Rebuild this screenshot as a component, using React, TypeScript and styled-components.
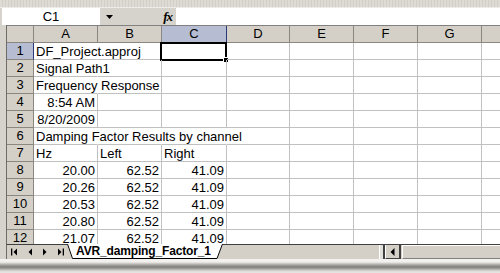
import styled, { createGlobalStyle } from 'styled-components'

const GlobalStyle = createGlobalStyle`
  html, body {
    margin: 0;
    padding: 0;
  }
  body {
    width: 500px;
    height: 273px;
    overflow: hidden;
    background: #d6d3cc;
    font-family: "Liberation Sans", Arial, sans-serif;
  }
`

const Window = styled.div`
  width: 500px;
  height: 273px;
  display: flex;
  flex-direction: column;
  overflow: hidden;
  background: #d6d3cc;
`

const TopStrip = styled.div`
  flex: none;
  height: 7px;
  border-bottom: 1px solid #ecebe7;
  background: repeating-linear-gradient(90deg, #dedbd5 0 2px, #d2cfc8 2px 3px);
`

const FormulaBar = styled.div`
  flex: none;
  height: 17px;
  display: flex;
  padding-left: 2px;
  font-size: 13px;
`

const NameBox = styled.div`
  width: 98px;
  background: #fff;
  text-align: center;
  line-height: 17px;
  color: #000;
`

const DropButton = styled.div`
  width: 18px;
  display: flex;
  align-items: center;
  justify-content: center;
  background: #d6d3cc;
`

const FxLabel = styled.div`
  width: 58px;
  display: flex;
  align-items: center;
  justify-content: flex-end;
  padding-right: 4px;
  box-sizing: border-box;
  font-family: "Liberation Serif", "Times New Roman", serif;
  font-style: italic;
  font-weight: bold;
  font-size: 13px;
  letter-spacing: -1px;
`

const FormulaInput = styled.div`
  flex: 1;
  background: #fff;
`

const SheetArea = styled.div`
  flex: none;
  height: 218px;
  margin-left: 6px;
  border-left: 1px solid #6f6c66;
  border-top: 1px solid #808080;
  overflow: hidden;
  background: #fff;
`

const Grid = styled.div`
  display: grid;
  grid-template-columns: 27px 64px 64px 65px 63px 64px 64px 64px 64px;
  grid-auto-rows: 17px;
  background: #fff;
  font-size: 13px;
  color: #000;
`

const HeadCell = styled.div<{ $selected?: boolean }>`
  box-sizing: border-box;
  background: ${p => (p.$selected ? '#b6bdd2' : '#d4d0c8')};
  border-right: 1px solid ${p => (p.$selected ? '#2a3a78' : '#8a8780')};
  border-bottom: 1px solid #8a8780;
  text-align: center;
  line-height: 16px;
`

const Cell = styled.div<{ $align?: 'left' | 'right'; $open?: boolean }>`
  position: relative;
  box-sizing: border-box;
  border-right: 1px solid ${p => (p.$open ? 'transparent' : '#c0c0c0')};
  border-bottom: 1px solid #c0c0c0;
  padding: 0 2px 0 2px;
  text-align: ${p => p.$align ?? 'left'};
  white-space: nowrap;
  overflow: visible;
  line-height: 17px;
`

const ActiveFrame = styled.div`
  position: absolute;
  left: -2px;
  top: -1px;
  right: -1px;
  bottom: -2px;
  border: 2px solid #000;
  pointer-events: none;
`

const FillHandle = styled.div`
  position: absolute;
  right: -4px;
  bottom: -4px;
  width: 4px;
  height: 4px;
  background: #000;
  border: 1px solid #fff;
`

const TabBar = styled.div`
  flex: none;
  box-sizing: border-box;
  width: 494px;
  height: 15px;
  display: flex;
  margin-left: 6px;
  border-left: 1px solid #6f6c66;
  border-top: 1px solid #404040;
  background: #d4d0c8;
`

const NavGroup = styled.div`
  display: flex;
  width: 60px;
  flex: none;
`

const NavButton = styled.div`
  width: 15px;
  display: flex;
  align-items: center;
  justify-content: center;
`

const SheetTab = styled.div`
  position: relative;
  flex: none;
  width: 156px;
  height: 14px;
  margin-top: -1px;
  font-weight: bold;
  font-size: 12px;
  letter-spacing: -0.15px;
  line-height: 15px;
  color: #000;
`

const TabShape = styled.svg`
  position: absolute;
  left: 0;
  top: 0;
`

const TabText = styled.span`
  position: relative;
  padding-left: 9px;
`

const ScrollBar = styled.div`
  flex: none;
  display: flex;
  margin-left: auto;
  width: 121px;
`

const Splitter = styled.div`
  flex: none;
  box-sizing: border-box;
  width: 6px;
  border-left: 1px solid #ffffff;
  border-right: 2px solid #404040;
  background: #e2e0da;
`

const ScrollButton = styled.div`
  flex: none;
  box-sizing: border-box;
  width: 16px;
  display: flex;
  align-items: center;
  justify-content: center;
  border-left: 1px solid #ffffff;
  border-right: 2px solid #404040;
  border-bottom: 1px solid #404040;
  background: #d4d0c8;
`

const ScrollThumb = styled.div`
  flex: 1;
  box-sizing: border-box;
  margin-left: 1px;
  border-top: 1px solid #ffffff;
  border-left: 1px solid #ffffff;
  border-bottom: 1px solid #808080;
  background: #d4d0c8;
`

const BottomFrame = styled.div`
  flex: 1;
  background: linear-gradient(
    180deg,
    #f4f3f1 0px,
    #f0efec 3px,
    #d7d6d3 4px,
    #a4a3a0 6px,
    #7f7e7b 8px,
    #a9a8a5 10px,
    #dcdbd8 12px,
    #ececea 15px
  );
`

const columns = ['A', 'B', 'C', 'D', 'E', 'F', 'G', 'H']

type CellData = { text?: string; align?: 'left' | 'right'; open?: boolean }

const rows: CellData[][] = [
  [{ text: 'DF_Project.approj', open: true }],
  [{ text: 'Signal Path1', open: true }],
  [{ text: 'Frequency Response', open: true }],
  [{ text: '8:54 AM', align: 'right' }],
  [{ text: '8/20/2009', align: 'right' }],
  [{ text: 'Damping Factor Results by channel', open: true }, { open: true }, { open: true }],
  [{ text: 'Hz' }, { text: 'Left' }, { text: 'Right' }],
  ...[
    ['20.00', '62.52', '41.09'],
    ['20.26', '62.52', '41.09'],
    ['20.53', '62.52', '41.09'],
    ['20.80', '62.52', '41.09'],
    ['21.07', '62.52', '41.09'],
  ].map(r => r.map(text => ({ text, align: 'right' as const }))),
]

const Tri = ({ dir, bar }: { dir: 'left' | 'right'; bar?: boolean }) => (
  <svg width="8" height="8" viewBox="0 0 8 8">
    {dir === 'left' ? (
      <>
        {bar && <rect x="0" y="0.5" width="1.3" height="7" fill="#000" />}
        <polygon points="6,0.5 6,7.5 2.5,4" fill="#000" />
      </>
    ) : (
      <>
        <polygon points="2,0.5 2,7.5 5.5,4" fill="#000" />
        {bar && <rect x="6.7" y="0.5" width="1.3" height="7" fill="#000" />}
      </>
    )}
  </svg>
)

export default function App() {
  return (
    <Window>
      <GlobalStyle />
      <TopStrip />
      <FormulaBar>
        <NameBox>C1</NameBox>
        <DropButton>
          <svg width="7" height="4" viewBox="0 0 7 4">
            <polygon points="0,0 7,0 3.5,4" fill="#000" />
          </svg>
        </DropButton>
        <FxLabel>fx</FxLabel>
        <FormulaInput />
      </FormulaBar>

      <SheetArea>
        <Grid>
          <HeadCell />
          {columns.map(c => (
            <HeadCell key={c} $selected={c === 'C'}>
              {c}
            </HeadCell>
          ))}
          {rows.map((row, r) => (
            <RowCells key={r} index={r} row={row} />
          ))}
        </Grid>
      </SheetArea>

      <TabBar>
        <NavGroup>
          <NavButton>
            <Tri dir="left" bar />
          </NavButton>
          <NavButton>
            <Tri dir="left" />
          </NavButton>
          <NavButton>
            <Tri dir="right" />
          </NavButton>
          <NavButton>
            <Tri dir="right" bar />
          </NavButton>
        </NavGroup>
        <SheetTab>
          <TabShape width="156" height="15" viewBox="0 0 156 15">
            <polygon points="0,0 5,14.5 150,14.5 156,0" fill="#fff" />
            <polyline points="0.5,0 5.5,14.5 150,14.5 155.5,0" fill="none" stroke="#000" strokeWidth="1" />
          </TabShape>
          <TabText>AVR_damping_Factor_1</TabText>
        </SheetTab>
        <ScrollBar>
          <Splitter />
          <ScrollButton>
            <svg width="5" height="8" viewBox="0 0 5 8">
              <polygon points="4.5,0 4.5,8 0.5,4" fill="#000" />
            </svg>
          </ScrollButton>
          <ScrollThumb />
        </ScrollBar>
      </TabBar>

      <BottomFrame />
    </Window>
  )
}

function RowCells({ index, row }: { index: number; row: CellData[] }) {
  return (
    <>
      <HeadCell $selected={index === 0}>{index + 1}</HeadCell>
      {columns.map((c, ci) => {
        const d = row[ci] ?? {}
        const active = index === 0 && c === 'C'
        return (
          <Cell key={c} $align={d.align} $open={d.open}>
            {d.text}
            {active && (
              <ActiveFrame>
                <FillHandle />
              </ActiveFrame>
            )}
          </Cell>
        )
      })}
    </>
  )
}
